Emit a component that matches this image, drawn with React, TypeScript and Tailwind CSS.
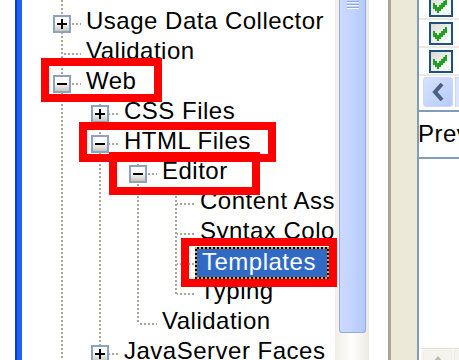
import React from "react";

type Item = {
  label: string;
  guides: boolean[];
  down: boolean;
  box?: "plus" | "minus";
  selected?: boolean;
};

const items: Item[] = [
  { label: "Usage Data Collector", guides: [], down: true, box: "plus" },
  { label: "Validation", guides: [], down: true },
  { label: "Web", guides: [], down: true, box: "minus" },
  { label: "CSS Files", guides: [true], down: true, box: "plus" },
  { label: "HTML Files", guides: [true], down: true, box: "minus" },
  { label: "Editor", guides: [true, true], down: true, box: "minus" },
  { label: "Content Assist", guides: [true, true, true], down: true },
  { label: "Syntax Coloring", guides: [true, true, true], down: true },
  { label: "Templates", guides: [true, true, true], down: true, selected: true },
  { label: "Typing", guides: [true, true, true], down: false },
  { label: "Validation", guides: [true, true], down: false },
  { label: "JavaServer Faces", guides: [true], down: true, box: "plus" },
];

const vdots =
  "absolute left-[18px] w-[2px] bg-[linear-gradient(to_bottom,#aca899_50%,transparent_50%)] bg-[length:2px_4px] bg-fixed";
const hdots =
  "absolute left-[20px] right-0 top-[17px] h-[2px] bg-[linear-gradient(to_right,#aca899_50%,transparent_50%)] bg-[length:4px_2px] bg-fixed";

const Expander = ({ kind }: { kind: "plus" | "minus" }) => (
  <div className="absolute left-[10px] top-[9px] w-[18px] h-[18px] border-2 border-[#8da2c0] bg-[linear-gradient(to_bottom,#ffffff_40%,#c9c6b9)] flex items-center justify-center">
    <div className="w-[10px] h-[2px] bg-black" />
    {kind === "plus" && <div className="absolute w-[2px] h-[10px] bg-black" />}
  </div>
);

const TreeRow = ({ item }: { item: Item }) => (
  <div className="flex items-center h-[30px] pl-[21px]">
    {item.guides.map((g, i) => (
      <div key={i} className="relative w-[38px] h-[30px] shrink-0">
        {g && <div className={`${vdots} top-0 bottom-0`} />}
      </div>
    ))}
    <div className="relative w-[38px] h-[30px] shrink-0">
      <div className={`${vdots} top-0 h-[18px]`} />
      {item.down && <div className={`${vdots} top-[18px] bottom-0`} />}
      <div className={hdots} />
      {item.box && <Expander kind={item.box} />}
    </div>
    {item.selected ? (
      <div className="h-[32px] p-[2px] translate-y-[2px] shrink-0 bg-[conic-gradient(#000_25%,#e3a54a_0_50%,#000_0_75%,#e3a54a_0)] bg-[length:4px_4px]">
        <div className="h-full bg-[#316ac5] text-white leading-[26px] pl-[5px] pr-[11px] whitespace-nowrap">
          {item.label}
        </div>
      </div>
    ) : (
      <span className="pl-[5px] pr-[14px] leading-[30px] whitespace-nowrap">{item.label}</span>
    )}
  </div>
);

const CheckMark = () => {
  const pattern = [
    "......X",
    ".....XX",
    "X...XXX",
    "XX.XXX.",
    "XXXXX..",
    ".XXX...",
    "..X....",
  ];
  return (
    <svg width="14" height="14" viewBox="0 0 7 7" shapeRendering="crispEdges">
      {pattern.flatMap((row, y) =>
        row.split("").map((c, x) =>
          c === "X" ? <rect key={`${x}-${y}`} x={x} y={y} width="1" height="1" fill="#21a121" /> : null
        )
      )}
    </svg>
  );
};

const CheckBox = () => (
  <div className="w-[24px] h-[23px] shrink-0 border-2 border-[#1c5180] bg-[linear-gradient(135deg,#dcdcd5,#ffffff)] pl-[2px] pt-[3px]">
    <CheckMark />
  </div>
);

export default function App() {
  return (
    <div className="relative w-[459px] h-[360px] overflow-hidden bg-white flex font-['Liberation_Sans',Arial,sans-serif] text-[24px] tracking-[0.5px] text-black">
      <div className="w-[15px] shrink-0" />
      <div className="w-[2px] shrink-0 bg-[#0a3ccc]" />
      <div className="w-[5px] shrink-0 bg-[#1b63f0]" />

      {/* tree */}
      <div className="w-[313px] shrink-0 overflow-hidden">
        <div className="h-[6px] pl-[21px] flex">
          <div className="relative w-[38px] h-[6px]">
            <div className={`${vdots} top-0 bottom-0`} />
          </div>
        </div>
        {items.map((it, i) => (
          <TreeRow key={i} item={it} />
        ))}
      </div>

      {/* vertical scrollbar */}
      <div className="w-[34px] shrink-0 flex flex-col bg-[linear-gradient(to_right,#f1efe6,#fdfdfb_50%,#ecebe2)]">
        <div className="h-[333px] ml-[4px] w-[27px] rounded-b-[3px] border-x border-b border-[#95ace2] bg-[linear-gradient(to_right,#cad9fe,#c3d4ff_45%,#b3cafa)] flex flex-col items-center pt-[1px] gap-[1px]">
          <div className="w-[12px] h-[2px] bg-[#8ca7ee] border-b border-white" />
          <div className="w-[12px] h-[2px] bg-[#8ca7ee] border-b border-white" />
          <div className="w-[12px] h-[2px] bg-[#8ca7ee] border-b border-white" />
        </div>
      </div>

      <div className="w-[19px] shrink-0 bg-white" />
      <div className="w-[3px] shrink-0 bg-[#a9a597]" />
      <div className="w-[26px] shrink-0 bg-[#ece9d8]" />
      <div className="w-[2px] shrink-0 bg-[#7f9db9]" />

      {/* right panel */}
      <div className="w-[40px] shrink-0 flex flex-col bg-white">
        <div className="h-[18px] pl-[10px] flex items-end pb-[1px] overflow-hidden">
          <CheckBox />
        </div>
        <div className="h-[2px] bg-[#ebe9e0]" />
        <div className="h-[26px] pl-[10px] pt-[2px]">
          <CheckBox />
        </div>
        <div className="h-[2px] bg-[#ebe9e0]" />
        <div className="h-[26px] pl-[10px] pt-[2px]">
          <CheckBox />
        </div>
        <div className="h-[2px] bg-[#ebe9e0]" />
        <div className="h-[31px] pt-[1px] flex">
          <div className="ml-[4px] w-[30px] h-[30px] rounded-[3px] border border-[#c9d7f9] bg-[linear-gradient(135deg,#d6e2fe,#b6cbf9)] flex items-center justify-center">
            <svg width="14" height="20" viewBox="0 0 14 20">
              <polyline points="11,2 4,10 11,18" fill="none" stroke="#4d6185" strokeWidth="4" />
            </svg>
          </div>
          <div className="ml-[2px] w-[4px] h-[30px] border-l border-t border-[#c9d7f9] bg-[#dbe5fd]" />
        </div>
        <div className="h-[3px]" />
        <div className="h-[2px] bg-[#7f9db9]" />
        <div className="h-[45px] pt-[7px] -ml-[1px] leading-[30px] whitespace-nowrap">Preview:</div>
        <div className="flex-1 border-t-2 border-[#7f9db9] flex flex-col">
          <div className="mt-auto ml-[2px] h-[12px] border-t border-[#e4e2d8] bg-[#f7f6f1] flex">
            <div className="ml-[2px] mt-[1px] w-[29px] h-[11px] rounded-t-[3px] border border-b-0 border-[#efede4] bg-[#f4f3ee] flex justify-center pt-[5px]">
              <svg width="10" height="6" viewBox="0 0 10 6">
                <polygon points="5,0 10,6 0,6" fill="#bdbbb0" />
              </svg>
            </div>
            <div className="ml-[2px] mt-[1px] flex-1 border-l border-t border-[#efede4] bg-[#f4f3ee]" />
          </div>
        </div>
      </div>

      {/* red annotation boxes */}
      <div className="absolute left-[41px] top-[58px] w-[121px] h-[44px] border-[8px] border-[#ff0000] pointer-events-none" />
      <div className="absolute left-[79px] top-[122px] w-[197px] h-[40px] border-[8px] border-[#ff0000] pointer-events-none" />
      <div className="absolute left-[109px] top-[152px] w-[151px] h-[43px] border-[8px] border-[#ff0000] pointer-events-none" />
      <div className="absolute left-[181px] top-[238px] w-[156px] h-[49px] border-[8px] border-[#ff0000] pointer-events-none" />
    </div>
  );
}
